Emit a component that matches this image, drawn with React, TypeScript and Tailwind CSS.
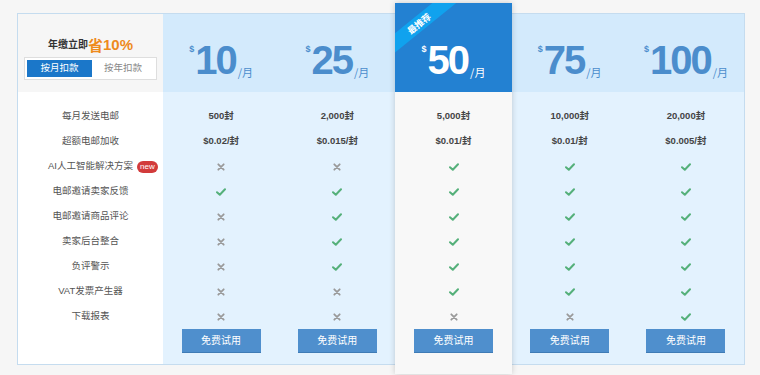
import React from "react";

type Cell = string | boolean;

const features = [
  "每月发送电邮",
  "超额电邮加收",
  "AI人工智能解决方案",
  "电邮邀请卖家反馈",
  "电邮邀请商品评论",
  "卖家后台整合",
  "负评警示",
  "VAT发票产生器",
  "下载报表",
];

const plans: { price: string; featured?: boolean; cells: Cell[] }[] = [
  { price: "10", cells: ["500封", "$0.02/封", false, true, false, false, false, false, false] },
  { price: "25", cells: ["2,000封", "$0.015/封", false, true, true, true, true, false, false] },
  { price: "50", featured: true, cells: ["5,000封", "$0.01/封", true, true, true, true, true, true, false] },
  { price: "75", cells: ["10,000封", "$0.01/封", true, true, true, true, true, true, false] },
  { price: "100", cells: ["20,000封", "$0.005/封", true, true, true, true, true, true, true] },
];

function Check() {
  return (
    <svg width="10" height="8" viewBox="0 0 10 8">
      <path d="M1 4.2 L3.8 6.8 L9 1.2" fill="none" stroke="#55b07a" strokeWidth="2" strokeLinecap="round" strokeLinejoin="round" />
    </svg>
  );
}

function Cross() {
  return (
    <svg width="8" height="8" viewBox="0 0 8 8">
      <path d="M1.3 1.3 L6.7 6.7 M6.7 1.3 L1.3 6.7" fill="none" stroke="#9a9a9a" strokeWidth="1.8" strokeLinecap="round" />
    </svg>
  );
}

function Price({ value, featured }: { value: string; featured?: boolean }) {
  const c = featured ? "text-white" : "text-[#4b8dcc]";
  return (
    <div className={`flex items-start ${c} font-['Liberation_Sans','Noto_Sans_CJK_SC',sans-serif]`}>
      <span className="text-[9px] font-bold leading-none mt-[5px] mr-[1px]">$</span>
      <span className="text-[40px] font-bold leading-none tracking-[-2px]">{value}</span>
      <span className="text-[11px] leading-none self-end mb-[2px] ml-[2px] font-['Noto_Sans_CJK_SC',sans-serif]">/月</span>
    </div>
  );
}

export default function App() {
  return (
    <div className="min-h-[375px] w-[760px] bg-[#f6f6f6] pt-[13px] pl-[17px] font-['Liberation_Sans','Noto_Sans_CJK_SC',sans-serif]">
      <div className="flex w-[728px] h-[352px] border border-[#c5dcef]">
        {/* left column */}
        <div className="w-[145px] flex flex-col bg-white">
          <div className="h-[78px] bg-[#f6f6f6] flex flex-col items-center pt-[20px]">
            <div className="flex items-end leading-none h-[18px]">
              <span className="text-[10px] font-bold text-[#333] mb-[2px]">年缴立即</span>
              <span className="text-[15px] font-bold text-[#ee8a1c] font-['Noto_Sans_CJK_SC',sans-serif]">省</span>
              <span className="text-[15px] font-bold text-[#ee8a1c]">10%</span>
            </div>
            <div className="mt-[5px] w-[133px] h-[23px] border border-[#dedede] bg-white p-[2px] flex">
              <div className="w-[65px] h-full bg-[#1b77c9] text-white text-[9.5px] flex items-center justify-center">按月扣款</div>
              <div className="flex-1 h-full text-[#888] text-[9.5px] flex items-center justify-center">按年扣款</div>
            </div>
          </div>
          <div className="pt-[12px] flex flex-col">
            {features.map((f, i) => (
              <div key={i} className="h-[25px] flex items-center justify-center text-[9.5px] text-[#555]">
                <span className="relative">
                  {f}
                  {i === 2 && (
                    <span className="absolute left-[calc(100%+4px)] top-1/2 -translate-y-1/2 bg-[#d23b3b] text-white text-[8px] leading-none px-[3px] py-[2px] rounded-full font-['Liberation_Sans',sans-serif]">
                      new
                    </span>
                  )}
                </span>
              </div>
            ))}
          </div>
        </div>
        {/* plan columns */}
        {plans.map((p, pi) =>
          p.featured ? (
            <div key={pi} className="flex-1 flex flex-col -mt-[11px] -mb-[10px] relative z-10 bg-[#f8f8f8] shadow-[0_0_6px_rgba(0,0,0,0.18)]">
              <div className="h-[89px] bg-[#2381d2] relative overflow-hidden flex items-end justify-center pb-[12px]">
                <div className="absolute left-[-22px] top-[13px] w-[92px] h-[15px] bg-[#10a2ee] -rotate-[39deg] flex items-center justify-center text-white text-[9px] font-bold leading-none font-['Noto_Sans_CJK_SC',sans-serif]">
                  最推荐
                </div>
                <Price value={p.price} featured />
              </div>
              <Body cells={p.cells} />
            </div>
          ) : (
            <div key={pi} className="flex-1 flex flex-col bg-[#e3f2fe]">
              <div className="h-[78px] bg-[#d3eafc] flex items-end justify-center pb-[12px]">
                <Price value={p.price} />
              </div>
              <Body cells={p.cells} />
            </div>
          )
        )}
      </div>
    </div>
  );
}

function Body({ cells }: { cells: Cell[] }) {
  return (
    <div className="pt-[12px] flex flex-col items-center">
      {cells.map((c, i) => (
        <div key={i} className="h-[25px] w-full flex items-center justify-center text-[9.5px] font-bold text-[#444]">
          {typeof c === "string" ? c : c ? <Check /> : <Cross />}
        </div>
      ))}
      <button className="w-[79px] h-[24px] bg-[#4f8fcd] border-b border-[#3f7bb5] text-white text-[10px] flex items-center justify-center">
        免费试用
      </button>
    </div>
  );
}
